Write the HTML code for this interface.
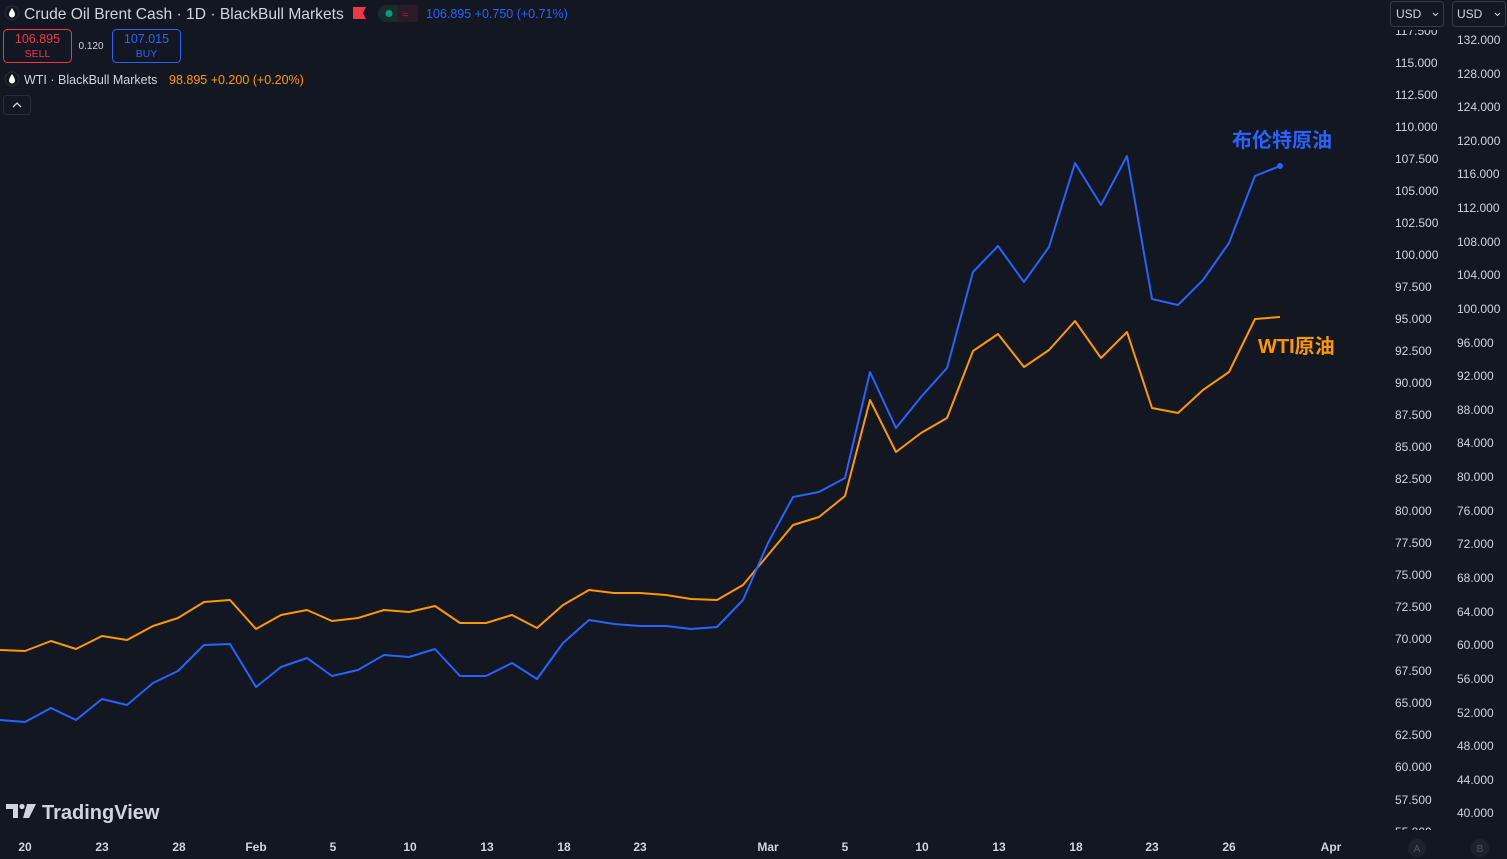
<!DOCTYPE html>
<html><head><meta charset="utf-8"><style>
html,body{margin:0;padding:0;background:#131722;width:1507px;height:859px;overflow:hidden;font-family:"Liberation Sans","Noto Sans CJK SC",sans-serif}
.abs{position:absolute}
svg text{font-family:"Liberation Sans","Noto Sans CJK SC",sans-serif}
</style></head><body>
<svg class="abs" style="left:0;top:0" width="1507" height="859">
<rect width="1507" height="859" fill="#131722"/>
<g font-size="12" fill="#d1d4dc" text-anchor="start">
<text x="1395" y="35">117.500</text>
<text x="1395" y="67">115.000</text><text x="1395" y="99">112.500</text><text x="1395" y="131">110.000</text><text x="1395" y="163">107.500</text><text x="1395" y="195">105.000</text><text x="1395" y="227">102.500</text><text x="1395" y="259">100.000</text><text x="1395" y="291">97.500</text><text x="1395" y="323">95.000</text><text x="1395" y="355">92.500</text><text x="1395" y="387">90.000</text><text x="1395" y="419">87.500</text><text x="1395" y="451">85.000</text><text x="1395" y="483">82.500</text><text x="1395" y="515">80.000</text><text x="1395" y="547">77.500</text><text x="1395" y="579">75.000</text><text x="1395" y="611">72.500</text><text x="1395" y="643">70.000</text><text x="1395" y="675">67.500</text><text x="1395" y="707">65.000</text><text x="1395" y="739">62.500</text><text x="1395" y="771">60.000</text><text x="1395" y="804">57.500</text><text x="1395" y="836">55.000</text>
<text x="1457" y="44">132.000</text><text x="1457" y="78">128.000</text><text x="1457" y="111">124.000</text><text x="1457" y="145">120.000</text><text x="1457" y="178">116.000</text><text x="1457" y="212">112.000</text><text x="1457" y="246">108.000</text><text x="1457" y="279">104.000</text><text x="1457" y="313">100.000</text><text x="1457" y="347">96.000</text><text x="1457" y="380">92.000</text><text x="1457" y="414">88.000</text><text x="1457" y="447">84.000</text><text x="1457" y="481">80.000</text><text x="1457" y="515">76.000</text><text x="1457" y="548">72.000</text><text x="1457" y="582">68.000</text><text x="1457" y="616">64.000</text><text x="1457" y="649">60.000</text><text x="1457" y="683">56.000</text><text x="1457" y="717">52.000</text><text x="1457" y="750">48.000</text><text x="1457" y="784">44.000</text><text x="1457" y="817">40.000</text>
</g>
<rect x="1385" y="0" width="122" height="30" fill="#131722"/>
<rect x="1385" y="830" width="122" height="29" fill="#131722"/>
<rect x="0" y="830" width="1385" height="29" fill="#131722"/>
<g font-size="12" fill="#d1d4dc" font-weight="bold" text-anchor="middle">
<text x="25" y="851">20</text><text x="102" y="851">23</text><text x="179" y="851">28</text><text x="256" y="851">Feb</text><text x="333" y="851">5</text><text x="410" y="851">10</text><text x="487" y="851">13</text><text x="564" y="851">18</text><text x="640" y="851">23</text><text x="768" y="851">Mar</text><text x="845" y="851">5</text><text x="922" y="851">10</text><text x="999" y="851">13</text><text x="1076" y="851">18</text><text x="1152" y="851">23</text><text x="1229" y="851">26</text><text x="1331" y="851">Apr</text>
</g>
<circle cx="1417" cy="848" r="9" fill="#1e222d"/><text x="1417" y="852" font-size="10" fill="#50535e" text-anchor="middle">A</text>
<circle cx="1480" cy="848" r="9" fill="#1e222d"/><text x="1480" y="852" font-size="10" fill="#50535e" text-anchor="middle">B</text>
<polyline fill="none" stroke="#ff9800" stroke-width="2" stroke-linejoin="round" points="0,650 25,651 51,641 76,649 102,636 127,640 153,626 178,618 204,602 230,600 256,629 281,615 307,610 332,621 358,618 384,610 409,612 435,606 460,623 486,623 512,615 537,628 563,605 589,590 614,593 640,593 666,595 691,599 717,600 743,585 768,555 793,525 819,517 845,496 870,400 896,452 921,433 947,418 973,351 998,334 1024,367 1049,350 1075,321 1101,358 1127,332 1152,408 1178,413 1203,390 1229,372 1255,319 1280,317"/>
<polyline fill="none" stroke="#2962ff" stroke-width="2" stroke-linejoin="round" points="0,720 25,722 51,708 76,720 102,699 127,705 153,683 178,671 204,645 230,644 256,687 281,667 307,658 332,676 358,670 384,655 409,657 435,649 460,676 486,676 512,663 537,679 563,643 589,620 614,624 640,626 666,626 691,629 717,627 743,600 768,543 793,497 819,492 845,478 870,372 896,428 921,397 947,368 973,272 998,246 1024,282 1049,247 1075,163 1101,205 1127,156 1152,299 1178,305 1203,280 1229,243 1255,176 1280,166"/>
<circle cx="1280" cy="166" r="3" fill="#2962ff"/>
<text x="1232" y="147" font-size="20" font-weight="bold" fill="#2962ff">布伦特原油</text>
<text x="1258" y="353" font-size="20" font-weight="bold" fill="#ff9800">WTI原油</text>
<circle cx="12" cy="13" r="7" fill="#131722" stroke="#2a2e39"/><path d="M12 8 C10 11 9 13 9 14.5 A3 3 0 0 0 15 14.5 C15 13 14 11 12 8Z" fill="#fff"/>
<text x="24" y="19" font-size="15.6" fill="#d1d4dc">Crude Oil Brent Cash · 1D · BlackBull Markets</text>
<path d="M353 7h13l-3 6 3 6h-13z" fill="#f23645"/>
<rect x="378" y="5" width="40" height="17" rx="8" fill="#1b2a2a"/><rect x="398" y="5" width="20" height="17" fill="#2d1a27"/><circle cx="389" cy="13.5" r="3.5" fill="#089981"/><text x="402" y="18" font-size="11" fill="#a0245a">≈</text>
<text x="426" y="18" font-size="12.5" fill="#2962ff">106.895  +0.750 (+0.71%)</text>
<rect x="3.5" y="29.5" width="68" height="33" rx="4" fill="#131722" stroke="#f23645"/>
<text x="37.5" y="43" font-size="12.5" fill="#f23645" text-anchor="middle">106.895</text>
<text x="37.5" y="57" font-size="10.5" fill="#f23645" text-anchor="middle">SELL</text>
<text x="91" y="49" font-size="10" fill="#d1d4dc" text-anchor="middle">0.120</text>
<rect x="112.5" y="29.5" width="68" height="33" rx="4" fill="#131722" stroke="#2962ff"/>
<text x="146.5" y="43" font-size="12.5" fill="#2962ff" text-anchor="middle">107.015</text>
<text x="146.5" y="57" font-size="10.5" fill="#2962ff" text-anchor="middle">BUY</text>
<circle cx="12" cy="79" r="7" fill="#131722" stroke="#2a2e39"/><path d="M12 74 C10 77 9 79 9 80.5 A3 3 0 0 0 15 80.5 C15 79 14 77 12 74Z" fill="#fff"/>
<text x="24" y="84" font-size="12.5" fill="#d1d4dc">WTI · BlackBull Markets</text>
<text x="169" y="84" font-size="12.5" fill="#ff9800">98.895 +0.200 (+0.20%)</text>
<rect x="3.5" y="95.5" width="27" height="19" rx="3" fill="none" stroke="#2a2e39"/>
<path d="M13 107l4-4 4 4" fill="none" stroke="#d1d4dc" stroke-width="1.3"/>
<rect x="1390.5" y="1.5" width="53" height="25" rx="3" fill="#131722" stroke="#363a45"/>
<text x="1396" y="18" font-size="12" fill="#d1d4dc">USD</text><path d="M1433 13l2.5 2.5 2.5-2.5" fill="none" stroke="#d1d4dc"/>
<rect x="1452.5" y="1.5" width="53" height="25" rx="3" fill="#131722" stroke="#363a45"/>
<text x="1457" y="18" font-size="12" fill="#d1d4dc">USD</text><path d="M1495 13l2.5 2.5 2.5-2.5" fill="none" stroke="#d1d4dc"/>
<g fill="#d1d4dc"><path d="M6 804h12v14h-5v-9h-7z"/><circle cx="22" cy="806.5" r="2.6"/><path d="M27 804h9l-7 14h-6z"/></g>
<text x="42" y="819" font-size="20" font-weight="bold" fill="#d1d4dc">TradingView</text>
</svg>
</body></html>
